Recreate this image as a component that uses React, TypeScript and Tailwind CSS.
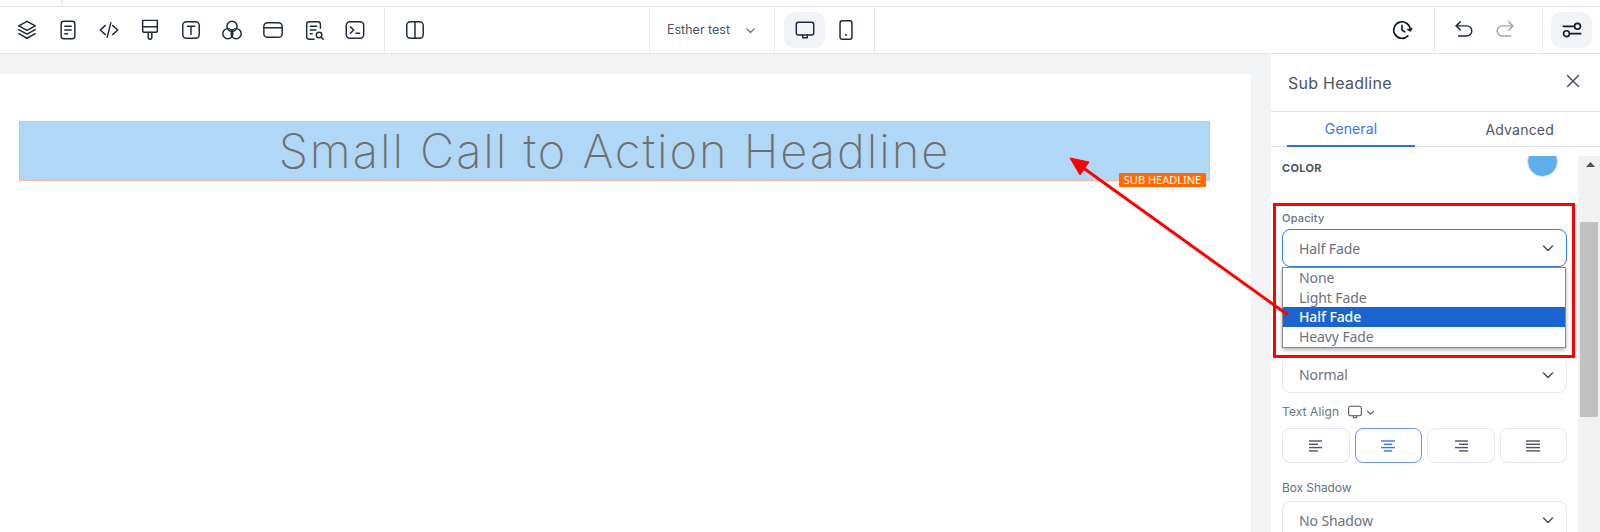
import type { ReactNode } from 'react';

function Ico({ children, size = 22, color = '#1e293b', sw = 1.6 }: { children: ReactNode; size?: number; color?: string; sw?: number }) {
  return (
    <svg width={size} height={size} viewBox="0 0 24 24" fill="none" stroke={color} strokeWidth={sw} strokeLinecap="round" strokeLinejoin="round">
      {children}
    </svg>
  );
}

function Chevron({ size = 16, color = '#4b5563' }: { size?: number; color?: string }) {
  return (
    <svg width={size} height={size} viewBox="0 0 16 16" fill="none" stroke={color} strokeWidth={1.6} strokeLinecap="round" strokeLinejoin="round">
      <path d="M3.5 6l4.5 4.5L12.5 6" />
    </svg>
  );
}

const toolIcons = [
  <><path d="M12 2.5l9 5-9 5-9-5z" /><path d="M3 11.5l9 5 9-5" /><path d="M3 16l9 5 9-5" /></>,
  <><rect x="4.5" y="2.5" width="15" height="19" rx="3" /><path d="M8.5 8h7M8.5 12h7M8.5 16h3" /></>,
  <><path d="M8 7l-5.5 5L8 17" /><path d="M16 7l5.5 5-5.5 5" /><path d="M14 4l-4 16" /></>,
  <><path d="M4 1.5h16v11a2 2 0 0 1-2 2H6a2 2 0 0 1-2-2z" /><path d="M4 8.5h16" /><path d="M10 14.5V20a2 2 0 0 0 4 0v-5.5" /></>,
  <><rect x="3" y="3" width="18" height="18" rx="4" /><path d="M8 8h8M12 8v9" /></>,
  <><circle cx="12" cy="8" r="5.5" /><circle cx="7.5" cy="16" r="5.5" /><circle cx="16.5" cy="16" r="5.5" /></>,
  <><rect x="2" y="4" width="20" height="16" rx="4" /><path d="M2 9.5h20" /></>,
  <><path d="M19 10V6a3 3 0 0 0-3-3H7a3 3 0 0 0-3 3v13a3 3 0 0 0 3 3h5" /><path d="M8 8h7M8 12h6M8 16h2" /><circle cx="17.5" cy="17.5" r="3" /><path d="M20 20l2 2" /></>,
  <><rect x="2.5" y="3" width="19" height="18" rx="4" /><path d="M7 8.5l3.5 3.5L7 15.5" /><path d="M13 15.5h4" /></>,
];

function Sep() {
  return <div className="w-px h-full bg-[#e5e7eb] shrink-0" />;
}

function Toolbar() {
  return (
    <div className="h-[46px] flex items-stretch border-y border-[#e2e5ea] bg-white box-content">
      <div className="w-[384px] flex items-center pl-[16px] gap-[19px] shrink-0">
        {toolIcons.map((ic, i) => (
          <Ico key={i}>{ic}</Ico>
        ))}
      </div>
      <Sep />
      <div className="w-[264px] flex items-center pl-[19px] shrink-0">
        <Ico><rect x="3" y="3" width="18" height="18" rx="4" /><path d="M12 3v18" /></Ico>
      </div>
      <Sep />
      <div className="w-[124px] flex items-center pl-[17px] shrink-0">
        <span className="text-[12.5px] text-[#4b5563]">Esther test</span>
        <span className="ml-[14px]"><Chevron size={13} color="#6b7280" /></span>
      </div>
      <Sep />
      <div className="w-[99px] flex items-center pl-[9px] shrink-0">
        <div className="w-[41px] h-[36px] rounded-[10px] bg-[#f1f3f7] flex items-center justify-center">
          <Ico><rect x="2.5" y="3.5" width="19" height="14" rx="2.5" /><path d="M9.5 17.5v3h5v-3" /></Ico>
        </div>
        <div className="w-[41px] flex items-center justify-center">
          <Ico><rect x="5.5" y="2" width="13" height="20" rx="2.5" /><path d="M12 17.5v.01" strokeWidth={2.2} /></Ico>
        </div>
      </div>
      <Sep />
      <div className="flex-1 flex items-center justify-end pr-[21px]">
        <Ico color="#111827" sw={1.8}><path d="M21 12a9 9 0 1 0-2.6 6.4" /><path d="M12 7v5l3 2" /><path d="M22.5 10.5L21 13l-2.5-1.5" /></Ico>
      </div>
      <Sep />
      <div className="w-[107px] flex items-center pl-[18px] gap-[19px] shrink-0">
        <Ico><path d="M8 3L3.5 7.5 8 12" /><path d="M3.5 7.5H15a5.5 5.5 0 0 1 0 11H6" /></Ico>
        <Ico color="#9ca3af"><path d="M16 3l4.5 4.5L16 12" /><path d="M20.5 7.5H9a5.5 5.5 0 0 0 0 11h9" /></Ico>
      </div>
      <Sep />
      <div className="w-[57px] flex items-center pl-[8px] shrink-0">
        <div className="w-[41px] h-[36px] rounded-[10px] bg-[#f1f3f7] flex items-center justify-center">
          <Ico color="#111827" sw={1.8}><path d="M2.5 8h11" /><circle cx="18" cy="8" r="3.2" /><path d="M21.5 16h-11" /><circle cx="6" cy="16" r="3.2" /></Ico>
        </div>
      </div>
    </div>
  );
}

function SelectBox({ value, h = 'h-[37px]', border = 'border-[#e5e7eb]' }: { value: string; h?: string; border?: string }) {
  return (
    <div className={`${h} border ${border} rounded-[8px] flex items-center justify-between pl-[16px] pr-[10px] text-[14px] tracking-[-0.1px] text-[#6b7280] font-['Noto_Sans',sans-serif]`}>
      {value}
      <Chevron />
    </div>
  );
}

function AlignBtn({ rows, active }: { rows: number[][]; active?: boolean }) {
  return (
    <div className={`flex-1 h-[35px] rounded-[8px] border flex items-center justify-center ${active ? 'border-[#6c93ee]' : 'border-[#e5e7eb]'}`}>
      <svg width="14" height="12" viewBox="0 0 14 12" stroke={active ? '#3b74f0' : '#4b5563'} strokeWidth={1.4}>
        {rows.map((r, i) => (
          <line key={i} x1={r[0]} x2={r[1]} y1={1 + i * 3.3} y2={1 + i * 3.3} />
        ))}
      </svg>
    </div>
  );
}

function Panel() {
  return (
    <div className="w-[329px] shrink-0 bg-white flex flex-col h-[478px] overflow-hidden">
      <div className="h-[58px] flex items-center justify-between pl-[17px] pr-[20px] border-b border-[#e2e5ea] shrink-0">
        <span className="text-[16px] text-[#4b5563] tracking-[0.25px]">Sub Headline</span>
        <svg width="14" height="14" viewBox="0 0 14 14" stroke="#4b5563" strokeWidth={1.5} strokeLinecap="round" className="mb-[3px]">
          <path d="M1.5 1.5l11 11M12.5 1.5l-11 11" />
        </svg>
      </div>
      <div className="h-[35px] flex border-b border-[#e2e5ea] shrink-0 pl-[16px]">
        <div className="w-[128px] h-[35px] border-b-[2px] border-[#2f6fed] flex items-center justify-center text-[14px] tracking-[0.1px] text-[#3b74f0]">General</div>
        <div className="flex-1 flex items-center justify-end pr-[46px] text-[14px] tracking-[0.2px] text-[#4b5563]">Advanced</div>
      </div>
      <div className="h-[9px] shrink-0" />
      <div className="flex flex-1 min-h-0">
        <div className="flex-1 px-[11px] overflow-hidden">
          <div className="flex justify-between items-start h-[55px]">
            <span className="mt-[5px] text-[11px] leading-[14px] font-bold text-[#4b5563] tracking-[0.3px]">COLOR</span>
            <span className="w-[31px] h-[31px] -mt-[10px] mr-[9px] rounded-full bg-[#5faeec] border border-[#dbe3ea]" />
          </div>
          <div className="text-[11px] leading-[14px] text-[#6b7280] font-medium tracking-[0.2px]">Opacity</div>
          <div className="relative mt-[4px]">
            <SelectBox value="Half Fade" h="h-[38px]" border="border-[#2f7fe8]" />
            <div className="absolute z-10 left-0 top-[38px] w-[284px] border border-[#8a8a8a] bg-white shadow-[0_2px_4px_rgba(0,0,0,0.3)] text-[14px] leading-[19.5px] tracking-[-0.1px] text-[#6b7280] pb-[1px] font-['Noto_Sans',sans-serif]">
              <div className="pl-[16px]">None</div>
              <div className="pl-[16px]">Light Fade</div>
              <div className="pl-[16px] bg-[#1a64d0] text-white font-medium">Half Fade</div>
              <div className="pl-[16px]">Heavy Fade</div>
            </div>
          </div>
          <div className="mt-[68px] text-[11px] leading-[14px] text-[#6b7280] font-medium">Letter Spacing</div>
          <div className="mt-[7px]">
            <SelectBox value="Normal" />
          </div>
          <div className="mt-[12px] flex items-center h-[14px] text-[12px] tracking-[0.1px] text-[#6b7280]">
            Text Align
            <span className="ml-[8px]">
              <Ico size={16} color="#4b5563" sw={1.6}><rect x="2.5" y="3.5" width="19" height="14" rx="2.5" /><path d="M9.5 17.5v3h5v-3" /></Ico>
            </span>
            <span className="ml-[2px]"><Chevron size={11} /></span>
          </div>
          <div className="mt-[9px] flex gap-[5px]">
            <AlignBtn rows={[[0, 13], [0, 9], [0, 13], [0, 9]]} />
            <AlignBtn active rows={[[0, 14], [3, 11], [0, 14], [3, 11]]} />
            <AlignBtn rows={[[1, 14], [5, 14], [1, 14], [5, 14]]} />
            <AlignBtn rows={[[0, 14], [0, 14], [0, 14], [0, 14]]} />
          </div>
          <div className="mt-[18px]">
            <div className="text-[12px] leading-[14px] text-[#6b7280] -tracking-[0.1px]">Box Shadow</div>
            <div className="mt-[6px]">
              <SelectBox value="No Shadow" h="h-[38px]" />
            </div>
          </div>
        </div>
        {/* scrollbar */}
        <div className="w-[22px] shrink-0 bg-[#f1f1f1] pl-[2px] flex flex-col">
          <div className="h-[16px] flex items-center justify-center pt-[1px]">
            <svg width="9" height="5" viewBox="0 0 9 5"><path d="M4.5 0L9 5H0z" fill="#505050" /></svg>
          </div>
          <div className="mt-[50px] h-[195px] w-[18px] bg-[#c1c1c1]" />
        </div>
      </div>
    </div>
  );
}

export default function App() {
  return (
    <div className="relative w-[1600px] h-[532px] overflow-hidden bg-white font-['Inter',sans-serif]">
      <div className="h-[6px] bg-white flex">
        <div className="ml-[61px] w-[2px] h-full bg-[#eceef1]" />
      </div>
      <Toolbar />
      <div className="flex bg-[#f1f3f5]">
        <div className="w-[1251px] shrink-0 mt-[20px] bg-white pl-[19px] pt-[47px] h-[458px]">
          <div className="relative w-[1191px] h-[60px] bg-[#b0d7f5] border border-[#f9b5a6] flex items-center justify-center">
            <span className="pb-[1px] text-[47px] leading-none font-extralight text-[#6f6f6f] tracking-[1.95px]">Small Call to Action Headline</span>
            <span className="absolute left-[1099px] top-[51px] h-[14px] w-[87px] rounded-[1px] bg-[#ff6a00] text-white text-[11px] leading-[14px] text-center whitespace-nowrap font-['Noto_Sans',sans-serif]">SUB HEADLINE</span>
          </div>
        </div>
        <div className="w-[20px] shrink-0" />
        <Panel />
      </div>

      {/* red annotation box */}
      <div className="absolute z-20 left-[1273px] top-[203px] w-[302px] h-[155px] border-[3px] border-[#ff0000]" />
      {/* red annotation arrow */}
      <svg className="absolute z-20 left-0 top-0 pointer-events-none" width="1600" height="532" viewBox="0 0 1600 532">
        <line x1="1288" y1="315" x2="1082" y2="167" stroke="#ff0000" strokeWidth={3} />
        <path d="M1070 158L1089 162L1080 175Z" fill="#ff0000" stroke="#ff0000" strokeWidth={1} />
      </svg>
    </div>
  );
}
